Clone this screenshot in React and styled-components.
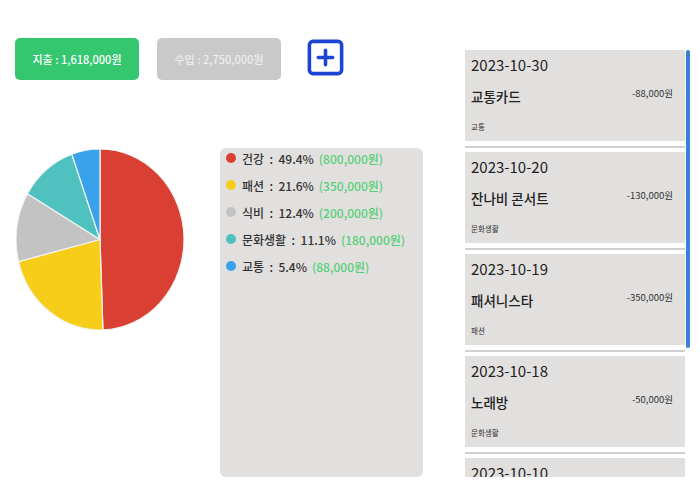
import React from "react";
import styled, { createGlobalStyle } from "styled-components";
import { SquarePlus } from "lucide-react";

const GlobalStyle = createGlobalStyle`
  html, body { margin: 0; padding: 0; background: #ffffff; }
  body { font-family: "Noto Sans CJK KR", "Noto Sans", sans-serif; color: #333; }
`;

const Page = styled.div`
  display: flex;
  width: 700px;
  height: 500px;
  overflow: hidden;
`;

const LeftCol = styled.div`
  display: flex;
  flex-direction: column;
  padding: 38px 0 0 15px;
  width: 410px;
  flex: none;
`;

const TopRow = styled.div`
  display: flex;
  align-items: center;
  gap: 18px;
`;

const SummaryButton = styled.button`
  width: 124px;
  height: 42px;
  border: none;
  border-radius: 5px;
  background: ${(p) => (p.$active ? "#34c770" : "#c9c9c9")};
  color: ${(p) => (p.$active ? "#ffffff" : "#ededed")};
  font-family: inherit;
  font-size: 11px;
  font-weight: 500;
  padding: 0;
  cursor: pointer;
`;

const AddButton = styled.button`
  display: flex;
  border: none;
  background: none;
  padding: 0;
  margin: -4px 0 0 5px;
  color: #1d45d4;
  cursor: pointer;
`;

const ContentRow = styled.div`
  display: flex;
  align-items: flex-start;
  margin-top: 68px;
`;

const PieWrap = styled.div`
  margin: 1px 0 0 1px;
  width: 168px;
  height: 181px;
  svg { display: block; }
`;

const Legend = styled.div`
  margin-left: 36px;
  width: 203px;
  height: 329px;
  box-sizing: border-box;
  background: #e2e0df;
  border-radius: 6px;
  padding: 0 0 0 6px;
  display: flex;
  flex-direction: column;
  gap: 7px;
`;

const LegendRow = styled.div`
  display: flex;
  align-items: center;
  height: 20px;
  font-size: 12px;
  font-weight: 500;
  color: #333;
  white-space: pre;
`;

const Dot = styled.span`
  width: 10px;
  height: 10px;
  border-radius: 50%;
  background: ${(p) => p.$color};
  margin-right: 6px;
  flex: none;
`;

const Amount = styled.span`
  color: #55cf78;
  margin-left: 5px;
`;

const RightCol = styled.div`
  position: relative;
  margin: 50px 0 0 40px;
  width: 225px;
  height: 427px;
  flex: none;
`;

const List = styled.div`
  width: 220px;
  height: 100%;
  overflow-y: auto;
  scrollbar-width: none;
  &::-webkit-scrollbar { display: none; }
`;

const ScrollThumb = styled.div`
  position: absolute;
  top: 0;
  left: 221px;
  width: 4px;
  height: 298px;
  border-radius: 3px;
  background: #3b80d8;
`;

const Item = styled.div`
  display: flex;
  flex-direction: column;
`;

const Card = styled.div`
  height: 91px;
  box-sizing: border-box;
  background: #e2e0df;
  padding: 5px 12px 0 6px;
  display: flex;
  flex-direction: column;
`;

const DateText = styled.div`
  font-size: 15px;
  line-height: 20px;
  color: #222;
`;

const TitleRow = styled.div`
  display: flex;
  justify-content: space-between;
  align-items: flex-start;
  margin-top: 11px;
`;

const Title = styled.div`
  font-size: 13.5px;
  line-height: 20px;
  font-weight: 500;
  color: #222;
`;

const Price = styled.div`
  font-size: 9.5px;
  line-height: 12px;
  margin-top: 1px;
  color: #333;
`;

const Category = styled.div`
  font-size: 7.5px;
  line-height: 12px;
  margin-top: 15px;
  color: #333;
`;

const Separator = styled.div`
  height: 2px;
  background: #cfcfcf;
  margin: 5px 0 4px;
`;

const slices = [
  { name: "건강", pct: 49.4, amount: "800,000원", value: 800000, color: "#d94033" },
  { name: "패션", pct: 21.6, amount: "350,000원", value: 350000, color: "#f6cd18" },
  { name: "식비", pct: 12.4, amount: "200,000원", value: 200000, color: "#c3c3c3" },
  { name: "문화생활", pct: 11.1, amount: "180,000원", value: 180000, color: "#4fc1bf" },
  { name: "교통", pct: 5.4, amount: "88,000원", value: 88000, color: "#38a2ea" },
];

const items = [
  { date: "2023-10-30", title: "교통카드", price: "-88,000원", cat: "교통" },
  { date: "2023-10-20", title: "잔나비 콘서트", price: "-130,000원", cat: "문화생활" },
  { date: "2023-10-19", title: "패셔니스타", price: "-350,000원", cat: "패션" },
  { date: "2023-10-18", title: "노래방", price: "-50,000원", cat: "문화생활" },
  { date: "2023-10-10", title: "식당", price: "-200,000원", cat: "식비" },
  { date: "2023-10-05", title: "병원", price: "-800,000원", cat: "건강" },
];

function Pie() {
  const total = slices.reduce((s, x) => s + x.value, 0);
  let acc = 0;
  const paths = slices.map((s) => {
    const a0 = (acc / total) * Math.PI * 2 - Math.PI / 2;
    acc += s.value;
    const a1 = (acc / total) * Math.PI * 2 - Math.PI / 2;
    const large = a1 - a0 > Math.PI ? 1 : 0;
    const x0 = Math.cos(a0), y0 = Math.sin(a0);
    const x1 = Math.cos(a1), y1 = Math.sin(a1);
    const d = `M0 0 L${x0} ${y0} A1 1 0 ${large} 1 ${x1} ${y1} Z`;
    return <path key={s.name} d={d} fill={s.color} stroke="#f4f4f4" strokeWidth="1.2" vectorEffect="non-scaling-stroke" />;
  });
  return (
    <svg width="168" height="181" viewBox="-1 -1 2 2" preserveAspectRatio="none">
      {paths}
    </svg>
  );
}

export default function App() {
  return (
    <>
      <GlobalStyle />
      <Page>
        <LeftCol>
          <TopRow>
            <SummaryButton $active>지출 : 1,618,000원</SummaryButton>
            <SummaryButton>수입 : 2,750,000원</SummaryButton>
            <AddButton aria-label="추가">
              <SquarePlus size={43} strokeWidth={2} />
            </AddButton>
          </TopRow>
          <ContentRow>
            <PieWrap>
              <Pie />
            </PieWrap>
            <Legend>
              {slices.map((s) => (
                <LegendRow key={s.name}>
                  <Dot $color={s.color} />
                  {`${s.name}  :  ${s.pct}%`}
                  <Amount>({s.amount})</Amount>
                </LegendRow>
              ))}
            </Legend>
          </ContentRow>
        </LeftCol>
        <RightCol>
          <List>
            {items.map((it) => (
              <Item key={it.date}>
                <Card>
                  <DateText>{it.date}</DateText>
                  <TitleRow>
                    <Title>{it.title}</Title>
                    <Price>{it.price}</Price>
                  </TitleRow>
                  <Category>{it.cat}</Category>
                </Card>
                <Separator />
              </Item>
            ))}
          </List>
          <ScrollThumb />
        </RightCol>
      </Page>
    </>
  );
}
